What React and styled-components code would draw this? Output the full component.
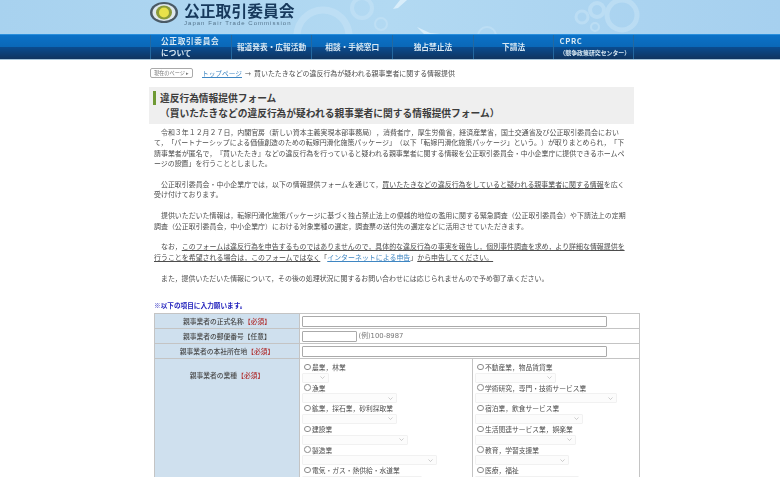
import React from "react";
import styled, { createGlobalStyle } from "styled-components";

const GlobalStyle = createGlobalStyle`
  html, body {
    margin: 0;
    height: 477px;
    overflow: hidden;
    background: #fff;
  }
  body {
    font-family: "Noto Sans CJK JP", "Noto Sans", sans-serif;
    color: #4d4d4d;
    text-spacing-trim: space-all;
  }
`;

const Page = styled.div`
  width: 780px;
  filter: blur(0.3px);
`;

const Header = styled.header`
  position: relative;
  height: 34px;
  background: linear-gradient(90deg, #a8d2ef 0%, #b2d9f2 50%, #a6d0ef 100%);
`;

const HeaderArt = styled.svg`
  position: absolute;
  inset: 0;
`;

const Logo = styled.div`
  position: relative;
  display: flex;
  align-items: flex-start;
  gap: 6px;
  margin-left: 150px;
  padding-top: 2px;
`;

const LogoText = styled.div`
  display: flex;
  flex-direction: column;
`;

const LogoName = styled.div`
  font-size: 15.8px;
  line-height: 17px;
  font-weight: 700;
  color: #17395c;
  white-space: nowrap;
`;

const LogoSub = styled.div`
  font-family: "Liberation Sans", sans-serif;
  font-size: 6px;
  line-height: 8px;
  letter-spacing: 1.02px;
  color: #54748c;
  white-space: nowrap;
`;

const Nav = styled.nav`
  height: 26px;
  padding-left: 150px;
  display: flex;
  box-sizing: border-box;
  border-top: 1px solid #2a8fdc;
  border-bottom: 1px solid #a9c6da;
  background: linear-gradient(180deg, #0b72c8 0%, #0a68b8 48%, #0a4b8e 52%, #10345f 100%);
`;

const NavItem = styled.div`
  width: 80.7px;
  box-sizing: border-box;
  border-left: 1px solid #24689f;
  display: flex;
  flex-direction: column;
  justify-content: center;
  align-items: ${(props) => (props.$pad ? "flex-start" : "center")};
  padding-left: ${(props) => props.$pad || 0}px;
  font-size: 7.7px;
  line-height: 12px;
  font-weight: 700;
  color: #d8e8f3;
  white-space: nowrap;

  &:last-child {
    border-right: 1px solid #24689f;
  }
`;

const NavWide = styled.span`
  letter-spacing: 0.65px;
`;

const NavSmall = styled.span`
  font-size: 5.9px;
`;

const Main = styled.main`
  margin-left: 149px;
  width: 492px;
`;

const Crumbs = styled.div`
  display: flex;
  align-items: center;
  height: 10px;
  margin-top: 8px;
  font-size: 6.94px;
  white-space: nowrap;
`;

const CrumbBadge = styled.span`
  width: 43px;
  height: 10px;
  margin-left: 1px;
  box-sizing: border-box;
  border: 1px solid #aaa;
  border-radius: 2px;
  font-size: 5.2px;
  line-height: 8px;
  text-align: center;
  color: #777;
`;

const CrumbLink = styled.a`
  margin-left: 9px;
  font-size: 6.7px;
  color: #3f86c2;
  text-decoration: underline;
`;

const CrumbArrow = styled.span`
  margin: 0 3px;
  font-size: 6px;
`;

const TitleBox = styled.div`
  position: relative;
  width: 485px;
  height: 37px;
  margin-top: 9px;
  box-sizing: border-box;
  padding: 4px 0 0 11px;
  background: #efefef;
  font-size: 9.72px;
  line-height: 15px;
  font-weight: 700;
  color: #3c3c3c;
  white-space: nowrap;

  &::before {
    content: "";
    position: absolute;
    left: 4px;
    top: 4px;
    width: 3px;
    height: 14px;
    background: #6f9a35;
  }
`;

const Body = styled.div`
  padding: 3px 0 0 5px;
  font-size: 6.94px;
  line-height: 10.4px;
  white-space: nowrap;
`;

const Para = styled.p`
  margin: 0 0 10.4px;
  text-indent: 1em;
`;

const Mark = styled.span`
  text-decoration: underline;
`;

const TextLink = styled.a`
  color: #3f86c2;
  text-decoration: underline;
`;

const Note = styled.div`
  margin: 17px 0 0 5px;
  font-size: 6.65px;
  line-height: 10px;
  font-weight: 700;
  color: #1d1dbb;
`;

const FormTable = styled.table`
  width: 486px;
  margin: 3px 0 0 5px;
  border-collapse: collapse;
  table-layout: fixed;
  font-size: 6.75px;
`;

const LabelCell = styled.th`
  width: 145px;
  height: 15px;
  padding: ${(props) => (props.$top ? "11px 0 0" : "0")};
  box-sizing: border-box;
  border: 1px solid #c4c4c4;
  background: #cfe0ee;
  font-weight: 500;
  color: #484848;
  vertical-align: ${(props) => (props.$top ? "top" : "middle")};
`;

const Required = styled.span`
  color: #b03030;
`;

const FieldCell = styled.td`
  height: 15px;
  padding: 0 0 0 1.5px;
  box-sizing: border-box;
  border: 1px solid #c4c4c4;
  color: #777;
`;

const OptionCell = styled.td`
  padding: 3px 0 0 1.5px;
  box-sizing: border-box;
  border: 1px solid #c4c4c4;
  vertical-align: top;
`;

const TextField = styled.input`
  width: ${(props) => props.$width}px;
  height: 11px;
  margin: 0 2px 0 0;
  padding: 0;
  box-sizing: border-box;
  border: 1px solid #aaa;
  border-radius: 1px;
  background: #fff;
  vertical-align: middle;
`;

const Hint = styled.span`
  font-family: "DejaVu Sans", "Noto Sans CJK JP", sans-serif;
  font-size: 6.8px;
`;

const OptionGroup = styled.div`
  height: 20.7px;
`;

const OptionLabel = styled.label`
  display: flex;
  align-items: center;
  height: 10.5px;
  line-height: 10.5px;
  white-space: nowrap;
`;

const Radio = styled.input.attrs({ type: "radio" })`
  appearance: none;
  width: 6.5px;
  height: 6.5px;
  margin: 0 1.5px 1px 2.5px;
  box-sizing: border-box;
  border: 0.7px solid #8a8a8a;
  border-radius: 50%;
  background: #fff;
`;

const Dropdown = styled.select`
  display: block;
  appearance: none;
  width: ${(props) => props.$width}px;
  height: 10px;
  padding: 0;
  box-sizing: border-box;
  border: 1px solid #ececec;
  border-radius: 1px;
  background: #fbfbfb url("data:image/svg+xml,%3Csvg xmlns='http://www.w3.org/2000/svg' width='5' height='3' viewBox='0 0 5 3'%3E%3Cpath d='M.5.5l2 2 2-2' fill='none' stroke='%23999' stroke-width='.7'/%3E%3C/svg%3E") no-repeat right 3px center;
  font-size: 6px;
`;

const leftOptions = [
  ["農業，林業", 27],
  ["漁業", 95],
  ["鉱業，採石業，砂利採取業", 95],
  ["建設業", 106],
  ["製造業", 135],
  ["電気・ガス・熱供給・水道業", 120],
];

const rightOptions = [
  ["不動産業，物品賃貸業", 81],
  ["学術研究，専門・技術サービス業", 142],
  ["宿泊業，飲食サービス業", 108],
  ["生活関連サービス業，娯楽業", 101],
  ["教育，学習支援業", 94],
  ["医療，福祉", 104],
];

const OptionList = ({ options }) => (
  <>
    {options.map(([name, width]) => (
      <OptionGroup key={name}>
        <OptionLabel>
          <Radio name="industry" />
          {name}
        </OptionLabel>
        <Dropdown $width={width} disabled />
      </OptionGroup>
    ))}
  </>
);

const App = () => {
  return (
    <Page>
      <GlobalStyle />
      <Header>
        <HeaderArt width="780" height="34" viewBox="0 0 780 34">
          <g fill="none" stroke="#c6e3f6" opacity="0.6">
            <circle cx="323" cy="36" r="26" strokeWidth="7" />
            <circle cx="362" cy="8" r="10" strokeWidth="4" />
            <circle cx="381" cy="24" r="6" strokeWidth="2" />
            <circle cx="487" cy="36" r="9" strokeWidth="2" />
            <circle cx="622" cy="15" r="15" strokeWidth="5" />
            <circle cx="597" cy="10" r="7" strokeWidth="4" />
            <circle cx="582" cy="17" r="6" strokeWidth="3" />
            <circle cx="595" cy="27" r="4" strokeWidth="2" />
          </g>
          <path d="M393 9 L400 0 L407 0 L398 8 Z" fill="#d8edfa" />
          <path d="M417 27 L430 33 L440 34 L424 34 Z" fill="#d8edfa" />
        </HeaderArt>
        <Logo>
          <svg width="28" height="21" viewBox="0 0 28 21">
            <ellipse cx="14" cy="10.5" rx="14" ry="10.5" fill="#4a5a66" />
            <ellipse cx="14" cy="10.5" rx="11.5" ry="8.5" fill="#dfe8ec" />
            <ellipse cx="14" cy="10.5" rx="8" ry="7" fill="#8a9a3a" />
            <circle cx="14" cy="10.5" r="5" fill="#e8e24a" />
          </svg>
          <LogoText>
            <LogoName>公正取引委員会</LogoName>
            <LogoSub>Japan Fair Trade Commission</LogoSub>
          </LogoText>
        </Logo>
      </Header>
      <Nav>
        <NavItem $pad={10}>
          <NavWide>公正取引委員会</NavWide>
          <span>について</span>
        </NavItem>
        <NavItem>報道発表・広報活動</NavItem>
        <NavItem>相談・手続窓口</NavItem>
        <NavItem>独占禁止法</NavItem>
        <NavItem>下請法</NavItem>
        <NavItem $pad={5}>
          <NavWide>CPRC</NavWide>
          <NavSmall>（競争政策研究センター）</NavSmall>
        </NavItem>
      </Nav>
      <Main>
        <Crumbs>
          <CrumbBadge>現在のページ ▸</CrumbBadge>
          <CrumbLink>トップページ</CrumbLink>
          <CrumbArrow>→</CrumbArrow>
          買いたたきなどの違反行為が疑われる親事業者に関する情報提供
        </Crumbs>
        <TitleBox>
          違反行為情報提供フォーム
          <br />
          （買いたたきなどの違反行為が疑われる親事業者に関する情報提供フォーム）
        </TitleBox>
        <Body>
          <Para>
            令和３年１２月２７日，内閣官房（新しい資本主義実現本部事務局），消費者庁，厚生労働省，経済産業省，国土交通省及び公正取引委員会におい
            <br />
            て，「パートナーシップによる価値創造のための転嫁円滑化施策パッケージ」（以下「転嫁円滑化施策パッケージ」という。）が取りまとめられ，「下
            <br />
            請事業者が匿名で，『買いたたき』などの違反行為を行っていると疑われる親事業者に関する情報を公正取引委員会・中小企業庁に提供できるホームペ
            <br />
            ージの設置」を行うこととしました。
          </Para>
          <Para>
            公正取引委員会・中小企業庁では，以下の情報提供フォームを通じて，
            <Mark>買いたたきなどの違反行為をしていると疑われる親事業者に関する情報</Mark>
            を広く
            <br />
            受け付けております。
          </Para>
          <Para>
            提供いただいた情報は，転嫁円滑化施策パッケージに基づく独占禁止法上の優越的地位の濫用に関する緊急調査（公正取引委員会）や下請法上の定期
            <br />
            調査（公正取引委員会，中小企業庁）における対象業種の選定，調査票の送付先の選定などに活用させていただきます。
          </Para>
          <Para>
            なお，
            <Mark>
              このフォームは違反行為を申告するものではありませんので，具体的な違反行為の事実を報告し，個別事件調査を求め，より詳細な情報提供を
              <br />
              行うことを希望される場合は，このフォームではなく
            </Mark>
            「<TextLink>インターネットによる申告</TextLink>」
            <Mark>から申告してください。</Mark>
          </Para>
          <Para>
            また，提供いただいた情報について，その後の処理状況に関するお問い合わせには応じられませんので予め御了承ください。
          </Para>
        </Body>
        <Note>※以下の項目に入力願います。</Note>
        <FormTable>
          <colgroup>
            <col width="145" />
            <col width="173" />
            <col />
          </colgroup>
          <tbody>
            <tr>
              <LabelCell>
                親事業者の正式名称<Required>【必須】</Required>
              </LabelCell>
              <FieldCell colSpan={2}>
                <TextField $width={305} />
              </FieldCell>
            </tr>
            <tr>
              <LabelCell>親事業者の郵便番号【任意】</LabelCell>
              <FieldCell colSpan={2}>
                <TextField $width={55} />
                <Hint>(例)100-8987</Hint>
              </FieldCell>
            </tr>
            <tr>
              <LabelCell>
                親事業者の本社所在地<Required>【必須】</Required>
              </LabelCell>
              <FieldCell colSpan={2}>
                <TextField $width={305} />
              </FieldCell>
            </tr>
            <tr>
              <LabelCell $top>
                親事業者の業種<Required>【必須】</Required>
              </LabelCell>
              <OptionCell>
                <OptionList options={leftOptions} />
              </OptionCell>
              <OptionCell>
                <OptionList options={rightOptions} />
              </OptionCell>
            </tr>
          </tbody>
        </FormTable>
      </Main>
    </Page>
  );
};

export default App;
